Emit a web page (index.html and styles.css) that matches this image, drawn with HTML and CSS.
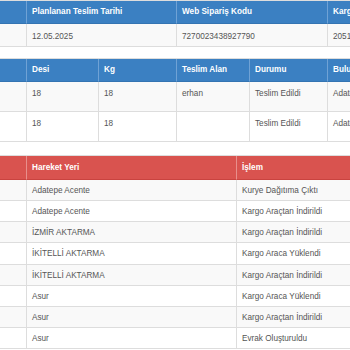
FILE: index.html
```html
<!DOCTYPE html>
<html lang="tr">
<head>
<meta charset="utf-8">
<title>Kargo Takip</title>
<link rel="stylesheet" href="styles.css">
</head>
<body>
<div class="page">
  <table class="grid grid-info t1">
    <colgroup><col class="c-cut"><col class="w150"><col class="w151"><col class="w200"></colgroup>
    <thead>
      <tr><th></th><th>Planlanan Teslim Tarihi</th><th>Web Sipariş Kodu</th><th>Kargo Takip No</th></tr>
    </thead>
    <tbody>
      <tr class="r23"><td></td><td>12.05.2025</td><td>7270023438927790</td><td>20517734926</td></tr>
    </tbody>
  </table>

  <table class="grid grid-info t2">
    <colgroup><col class="c-cut"><col class="w72"><col class="w78"><col class="w73"><col class="w78"><col class="w200"></colgroup>
    <thead>
      <tr><th></th><th>Desi</th><th>Kg</th><th>Teslim Alan</th><th>Durumu</th><th>Bulunduğu Yer</th></tr>
    </thead>
    <tbody>
      <tr class="r30"><td></td><td>18</td><td>18</td><td>erhan</td><td>Teslim Edildi</td><td>Adatepe Acente</td></tr>
      <tr class="r30"><td></td><td>18</td><td>18</td><td></td><td>Teslim Edildi</td><td>Adatepe Acente</td></tr>
    </tbody>
  </table>

  <table class="grid grid-danger t3">
    <colgroup><col class="c-cut"><col class="w210"><col class="w200"></colgroup>
    <thead>
      <tr><th></th><th>Hareket Yeri</th><th>İşlem</th></tr>
    </thead>
    <tbody>
      <tr><td></td><td>Adatepe Acente</td><td>Kurye Dağıtıma Çıktı</td></tr>
      <tr><td></td><td>Adatepe Acente</td><td>Kargo Araçtan İndirildi</td></tr>
      <tr><td></td><td>İZMİR AKTARMA</td><td>Kargo Araçtan İndirildi</td></tr>
      <tr><td></td><td>İKİTELLİ AKTARMA</td><td>Kargo Araca Yüklendi</td></tr>
      <tr><td></td><td>İKİTELLİ AKTARMA</td><td>Kargo Araçtan İndirildi</td></tr>
      <tr><td></td><td>Asur</td><td>Kargo Araca Yüklendi</td></tr>
      <tr><td></td><td>Asur</td><td>Kargo Araçtan İndirildi</td></tr>
      <tr><td></td><td>Asur</td><td>Evrak Oluşturuldu</td></tr>
    </tbody>
  </table>
</div>
</body>
</html>
```

FILE: styles.css
```css
html, body {
  margin: 0;
  padding: 0;
  background: #ffffff;
  overflow: hidden;
}

.page {
  width: 350px;
  height: 350px;
  overflow: hidden;
  font-family: "Liberation Sans", Arial, sans-serif;
  font-size: 8.2px;
  color: #555555;
}

.grid {
  table-layout: fixed;
  border-collapse: separate;
  border-spacing: 0;
  border-top: 1px solid #dddddd;
  margin: 0 0 11px 0;
}

.t1, .t2 { width: 528px; }
.t3 { width: 437px; }

.t2 { margin-bottom: 13px; }

.c-cut { width: 27px; }
.w72 { width: 72px; }
.w73 { width: 73px; }
.w78 { width: 78px; }
.w150 { width: 150px; }
.w151 { width: 151px; }
.w200 { width: 200px; }
.w210 { width: 210px; }

.grid th,
.grid td {
  box-sizing: border-box;
  text-align: left;
  vertical-align: top;
  white-space: nowrap;
  overflow: hidden;
  line-height: 15px;
  padding: 3px 5px 4px;
  border-bottom: 1px solid #dddddd;
  border-right: 1px solid #dddddd;
}

.grid th {
  font-weight: bold;
  color: #ffffff;
}

.grid-info th {
  background: #3b80c2;
  border-right-color: #6fa2d5;
  border-bottom-color: #3474b2;
}

.grid-danger th {
  background: #d9534f;
  border-right-color: #e88f8c;
  border-bottom-color: #c9433f;
  padding: 4px 5px 4px;
}

.grid tbody tr:nth-child(odd) td {
  background: #f9f9f9;
}

.r23 td {
  padding: 5px 5px 2px;
}

.r30 td {
  padding: 4px 5px 10px;
}

.t3 td {
  padding: 3px 5px 2px;
  line-height: 15.15px;
}
```
